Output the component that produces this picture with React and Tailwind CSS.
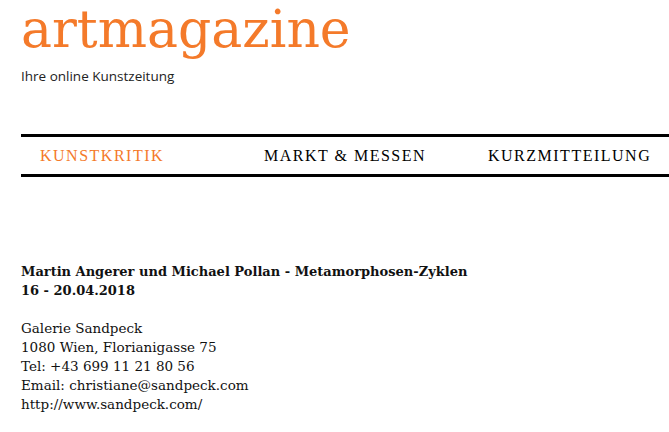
export default function App() {
  const nav = ["KUNSTKRITIK", "MARKT & MESSEN", "KURZMITTEILUNG"];
  return (
    <div className="min-h-screen bg-white overflow-hidden">
      <header className="pl-[21px]">
        <h1 className="text-[52px] leading-[58px] text-[#f47a2a] font-['DejaVu_Serif',serif]">
          artmagazine
        </h1>
        <p className="mt-[8px] text-[13.5px] text-[#222] font-['Open_Sans',sans-serif]">
          Ihre online Kunstzeitung
        </p>
      </header>
      <nav className="ml-[21px] mt-[48px] border-y-[3px] border-black h-[43px] flex items-center whitespace-nowrap">
        {nav.map((item, i) => (
          <a
            key={item}
            className={
              "w-[224px] shrink-0 pl-[19px] text-[16px] tracking-[1.5px] font-['Liberation_Serif',serif] " +
              (i === 0 ? "text-[#f47a2a]" : "text-black")
            }
          >
            {item}
          </a>
        ))}
      </nav>
      <section className="pl-[21px] pt-[85px] font-['DejaVu_Serif',serif] text-[13px] leading-[19px] text-[#111]">
        <p className="font-bold">
          Martin Angerer und Michael Pollan - Metamorphosen-Zyklen
          <br />
          16 - 20.04.2018
        </p>
        <p className="mt-[19px] text-[13.5px]">
          Galerie Sandpeck
          <br />
          1080 Wien, Florianigasse 75
          <br />
          Tel: +43 699 11 21 80 56
          <br />
          Email: christiane@sandpeck.com
          <br />
          http://www.sandpeck.com/
        </p>
      </section>
    </div>
  );
}
